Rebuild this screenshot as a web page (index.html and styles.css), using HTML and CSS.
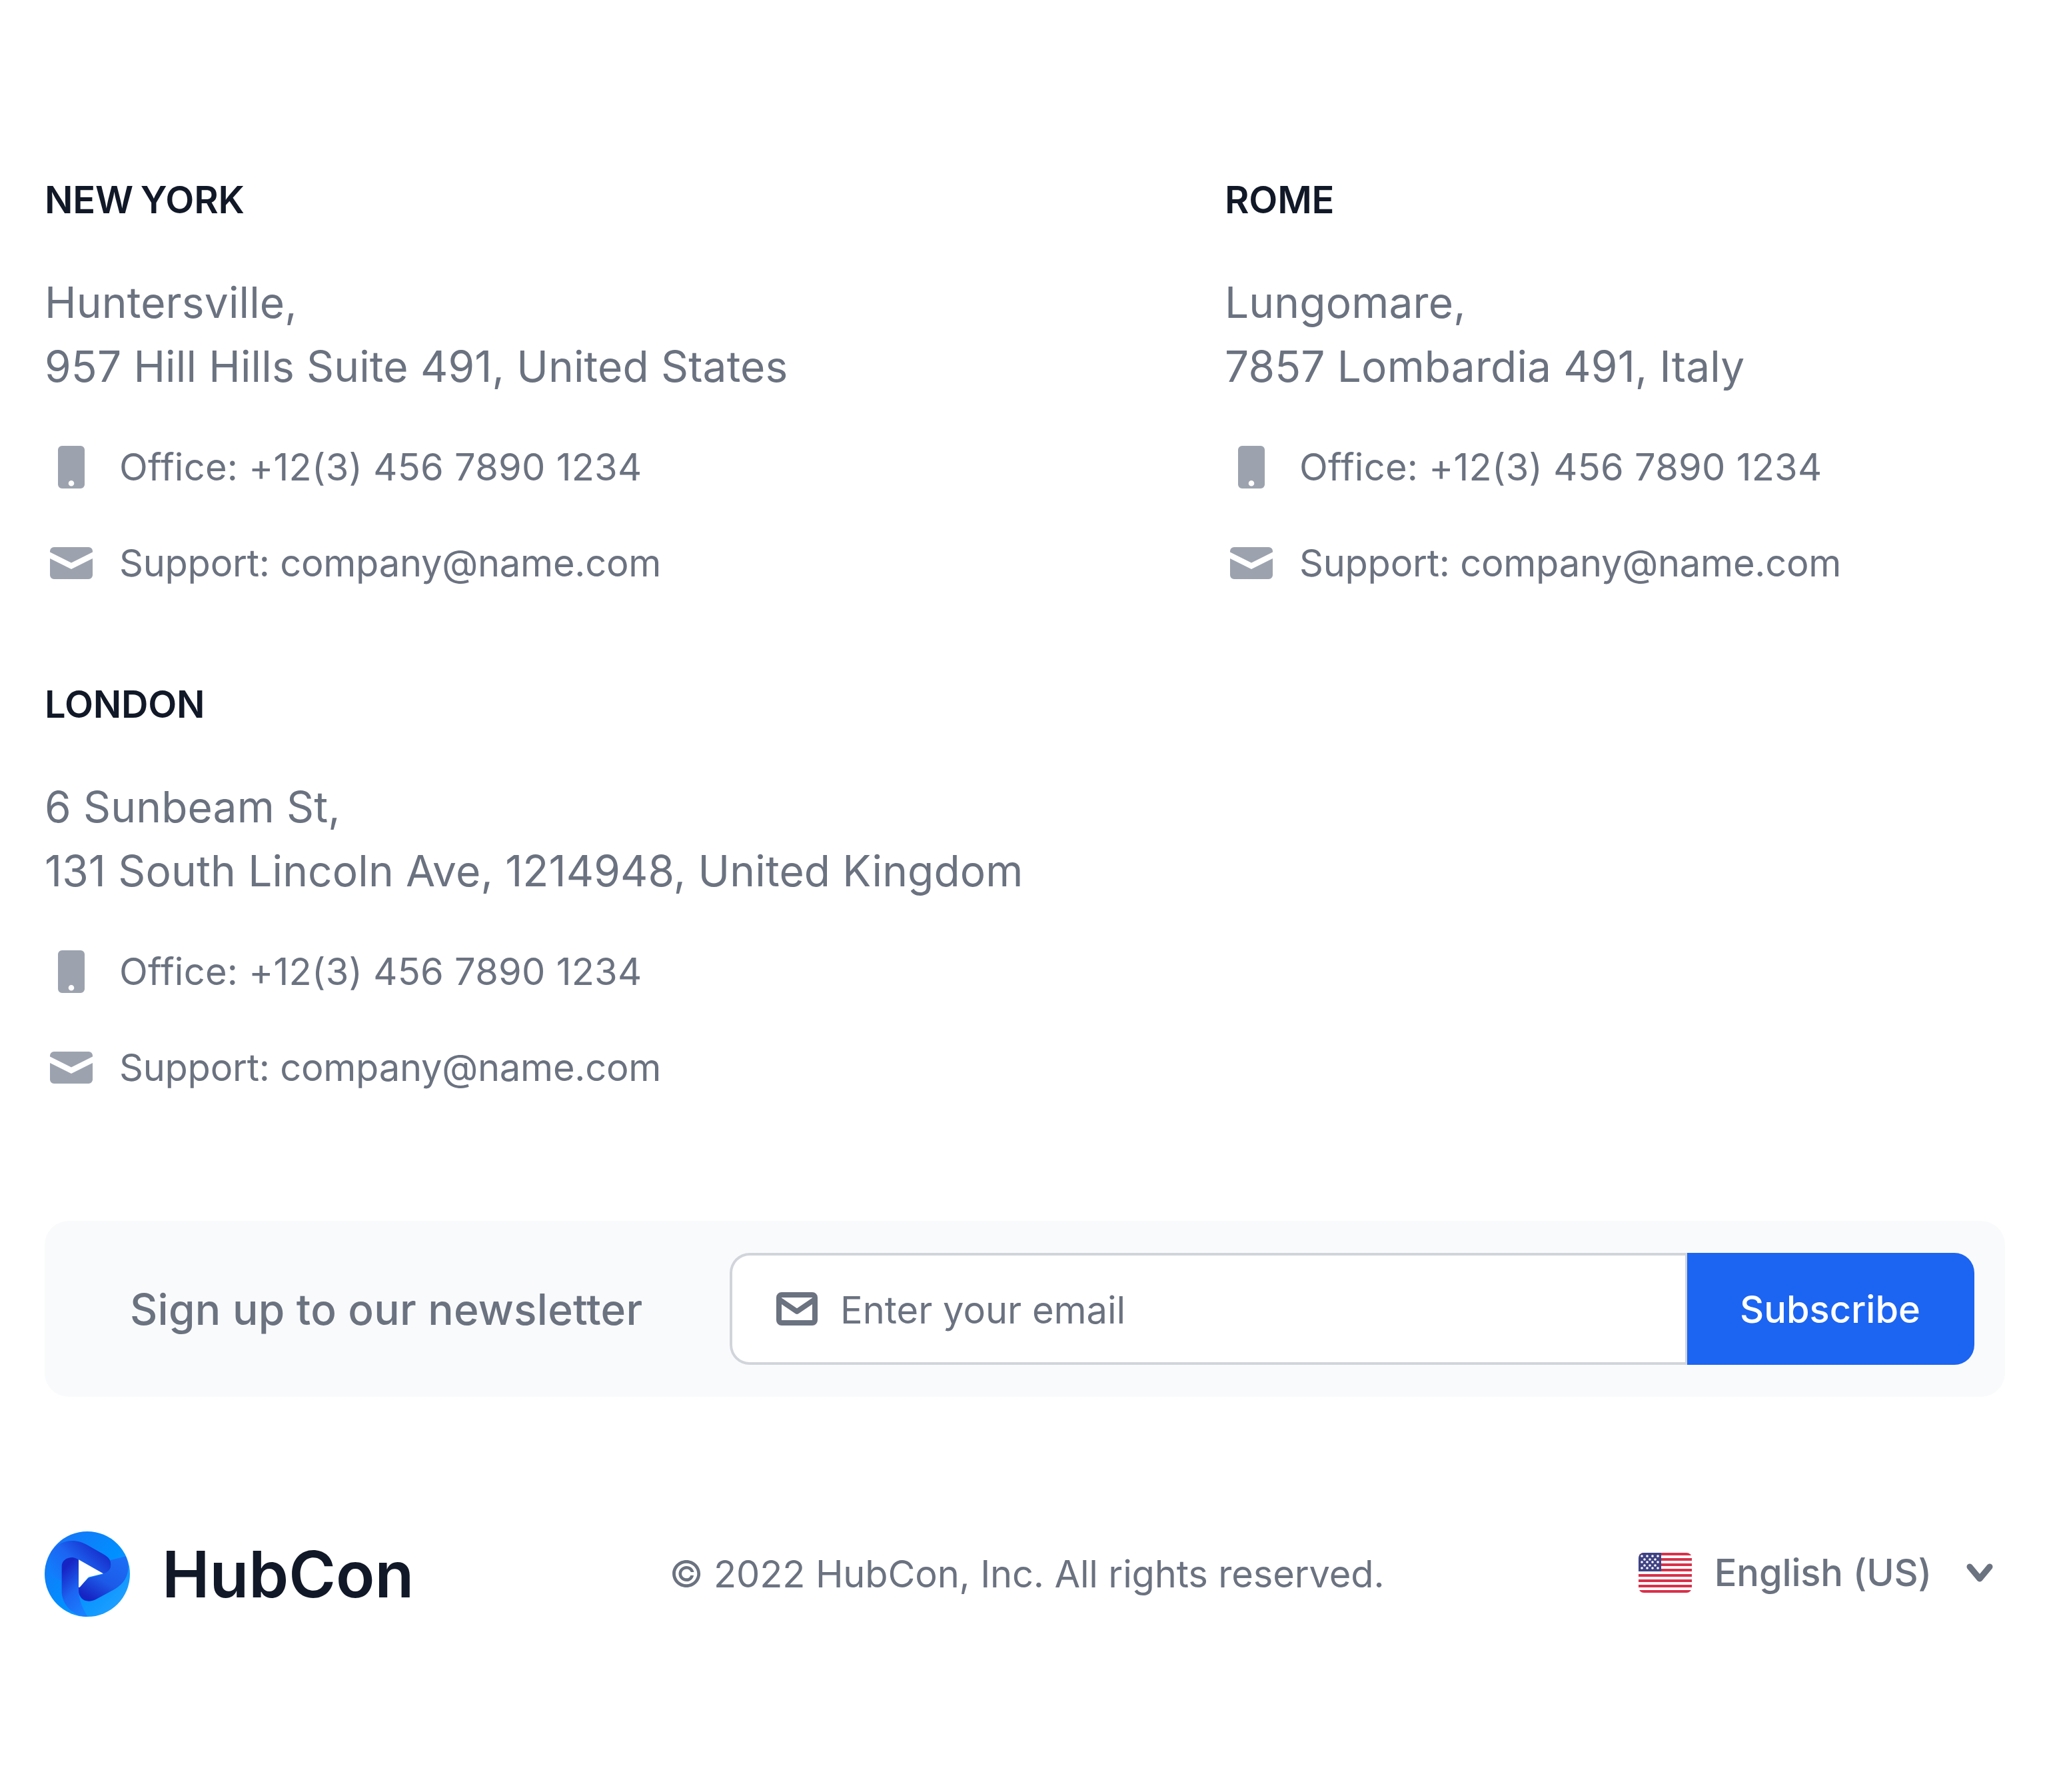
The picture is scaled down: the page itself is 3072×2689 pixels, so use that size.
FILE: index.html
```html
<!DOCTYPE html>
<html lang="en">

<head>
    <meta charset="UTF-8">
    <title>HubCon footer</title>
    <link rel="stylesheet" href="styles.css">
</head>

<body>
    <footer class="footer">
        <!-- Offices -->
        <div class="offices">
            <div class="office">
                <h2>NEW YORK</h2>
                <p class="address">Huntersville,<br>957 Hill Hills Suite 491, United States</p>
                <div class="contact phone">
                    <svg class="contact-icon" viewBox="0 0 80 80"><path fill-rule="evenodd" d="M26 8h28a6 6 0 0 1 6 6v52a6 6 0 0 1-6 6H26a6 6 0 0 1-6-6V14a6 6 0 0 1 6-6zm14 52a4.300 4.300 0 1 0 0 8.600 4.300 4.300 0 0 0 0-8.600z"/></svg>
                    <span>Office: +12(3) 456 7890 1234</span>
                </div>
                <div class="contact mail">
                    <svg class="contact-icon" viewBox="0 0 80 80"><path d="M8 23.500V22a6 6 0 0 1 6-6h52a6 6 0 0 1 6 6v1.500L40 39.500 8 23.500z"/><path d="M8 33v25a6 6 0 0 0 6 6h52a6 6 0 0 0 6-6V33L40 49 8 33z"/></svg>
                    <span>Support: company@name.com</span>
                </div>
            </div>
            <div class="office">
                <h2>ROME</h2>
                <p class="address">Lungomare,<br>7857 Lombardia 491, Italy</p>
                <div class="contact phone">
                    <svg class="contact-icon" viewBox="0 0 80 80"><path fill-rule="evenodd" d="M26 8h28a6 6 0 0 1 6 6v52a6 6 0 0 1-6 6H26a6 6 0 0 1-6-6V14a6 6 0 0 1 6-6zm14 52a4.300 4.300 0 1 0 0 8.600 4.300 4.300 0 0 0 0-8.600z"/></svg>
                    <span>Office: +12(3) 456 7890 1234</span>
                </div>
                <div class="contact mail">
                    <svg class="contact-icon" viewBox="0 0 80 80"><path d="M8 23.500V22a6 6 0 0 1 6-6h52a6 6 0 0 1 6 6v1.500L40 39.500 8 23.500z"/><path d="M8 33v25a6 6 0 0 0 6 6h52a6 6 0 0 0 6-6V33L40 49 8 33z"/></svg>
                    <span>Support: company@name.com</span>
                </div>
            </div>
            <div class="office">
                <h2>LONDON</h2>
                <p class="address">6 Sunbeam St,<br>131 South Lincoln Ave, 1214948, United Kingdom</p>
                <div class="contact phone">
                    <svg class="contact-icon" viewBox="0 0 80 80"><path fill-rule="evenodd" d="M26 8h28a6 6 0 0 1 6 6v52a6 6 0 0 1-6 6H26a6 6 0 0 1-6-6V14a6 6 0 0 1 6-6zm14 52a4.300 4.300 0 1 0 0 8.600 4.300 4.300 0 0 0 0-8.600z"/></svg>
                    <span>Office: +12(3) 456 7890 1234</span>
                </div>
                <div class="contact mail">
                    <svg class="contact-icon" viewBox="0 0 80 80"><path d="M8 23.500V22a6 6 0 0 1 6-6h52a6 6 0 0 1 6 6v1.500L40 39.500 8 23.500z"/><path d="M8 33v25a6 6 0 0 0 6 6h52a6 6 0 0 0 6-6V33L40 49 8 33z"/></svg>
                    <span>Support: company@name.com</span>
                </div>
            </div>
        </div>

        <!-- Newsletter -->
        <div class="newsletter">
            <div class="newsletter-title">Sign up to our newsletter</div>
            <div class="email-field">
                <svg class="email-icon" viewBox="0 0 62 50" fill="none" stroke="#6b7280" stroke-width="8" stroke-linejoin="round">
                    <rect x="4" y="4" width="54" height="42" rx="4"/>
                    <path d="M6 12l25 17 25-17"/>
                </svg>
                <input type="email" placeholder="Enter your email">
            </div>
            <button class="subscribe">Subscribe</button>
        </div>

        <!-- Bottom row -->
        <div class="bottom">
            <div class="brand">
                <svg class="logo" viewBox="81 78 384 384">
                    <defs>
                        <linearGradient id="logoBase" x1="0" y1="0" x2="1" y2="1">
                            <stop offset="0" stop-color="#1c6ef5"/>
                            <stop offset="0.55" stop-color="#0090ff"/>
                            <stop offset="1" stop-color="#2aa5ff"/>
                        </linearGradient>
                        <linearGradient id="logoTop" x1="0" y1="1" x2="1" y2="0.300">
                            <stop offset="0" stop-color="#0f84ff"/>
                            <stop offset="0.500" stop-color="#1c64f2"/>
                            <stop offset="1" stop-color="#1624c4"/>
                        </linearGradient>
                        <linearGradient id="logoBottom" x1="0.900" y1="0.100" x2="0.300" y2="1">
                            <stop offset="0" stop-color="#1c6cf5"/>
                            <stop offset="0.550" stop-color="#1c5ae8"/>
                            <stop offset="1" stop-color="#1624c4"/>
                        </linearGradient>
                        <linearGradient id="logoLeft" x1="0.300" y1="0.100" x2="0.700" y2="1">
                            <stop offset="0" stop-color="#1624c4"/>
                            <stop offset="0.500" stop-color="#1c64f2"/>
                            <stop offset="1" stop-color="#1a80ff"/>
                        </linearGradient>
                    </defs>
                    <circle cx="273" cy="270" r="192" fill="url(#logoBase)"/>
                    <path d="M108 172C135 135 170 120 205 120c25 0 48 8 70 20l75 43c18 11 30 25 30 45 0 22-15 36-35 42L234 205c-10-6-20-10-29-10-27 0-47 20-47 45v60l-50-20z" fill="url(#logoTop)"/>
                    <path d="M158 235c0-24 20-40 47-40 10 0 19 4 29 10v130c0 40 10 75 40 127-70-2-116-60-116-112z" fill="url(#logoLeft)"/>
                    <path d="M446 190c24 55 10 115-50 148l-86 47c-10 5-20 7-30 7-28 0-46-22-46-47v-15l40-38c5-5 14-7 22-9l49-13c20-6 35-20 35-42 0-8-2-14-5-20z" fill="url(#logoBottom)"/>
                    <path d="M234 205l111 63-58 14c-6 1-10 3-14 8l-32 37c-3 4-7 4-7-1z" fill="#fff"/>
                </svg>
                <span class="brand-name">HubCon</span>
            </div>
            <div class="copyright">© 2022 HubCon, Inc. All rights reserved.</div>
            <div class="language">
                <svg class="flag" viewBox="0 0 80 60">
                    <defs>
                        <clipPath id="flagClip"><rect y="0" width="80" height="60" rx="8"/></clipPath>
                    </defs>
                    <g clip-path="url(#flagClip)">
                        <rect width="80" height="60" fill="#fff"/>
                        <rect y="0" width="80" height="4" fill="#d9304a"/>
                        <rect y="8" width="80" height="4" fill="#d9304a"/>
                        <rect y="16" width="80" height="4" fill="#d9304a"/>
                        <rect y="24" width="80" height="4" fill="#d9304a"/>
                        <rect y="32" width="80" height="4" fill="#d9304a"/>
                        <rect y="40" width="80" height="4" fill="#d9304a"/>
                        <rect y="48" width="80" height="4" fill="#d9304a"/>
                        <rect y="56" width="80" height="4" fill="#d9304a"/>
                        <rect width="34" height="28" fill="#3f4384"/>
                        <g fill="#fff">
                            <circle cx="5" cy="5" r="1.800"/><circle cx="13" cy="5" r="1.800"/><circle cx="21" cy="5" r="1.800"/><circle cx="29" cy="5" r="1.800"/>
                            <circle cx="9" cy="10" r="1.800"/><circle cx="17" cy="10" r="1.800"/><circle cx="25" cy="10" r="1.800"/>
                            <circle cx="5" cy="14" r="1.800"/><circle cx="13" cy="14" r="1.800"/><circle cx="21" cy="14" r="1.800"/><circle cx="29" cy="14" r="1.800"/>
                            <circle cx="9" cy="19" r="1.800"/><circle cx="17" cy="19" r="1.800"/><circle cx="25" cy="19" r="1.800"/>
                            <circle cx="5" cy="23" r="1.800"/><circle cx="13" cy="23" r="1.800"/><circle cx="21" cy="23" r="1.800"/><circle cx="29" cy="23" r="1.800"/>
                        </g>
                    </g>
                </svg>
                <span class="language-name">English (US)</span>
                <svg class="chevron" viewBox="0 0 40 28" fill="none" stroke="#6b7280" stroke-width="9" stroke-linecap="round" stroke-linejoin="round"><path d="M5 5l15 18L35 5"/></svg>
            </div>
        </div>
    </footer>
</body>

</html>
```

FILE: styles.css
```css
body {
    margin: 0;
    background-color: #fff;
    font-family: Inter, "Noto Sans", sans-serif;
    color: #6b7280;
}

.footer {
    padding: 264px 63px 0 67px;
}

.offices {
    display: grid;
    grid-template-columns: 1771px 1fr;
    row-gap: 128px;
}

.office h2 {
    margin: 0;
    font-size: 56px;
    line-height: 72px;
    font-weight: 600;
    letter-spacing: -0.2px;
    word-spacing: -3px;
    color: #111827;
}

.address {
    margin: 70px 0 0;
    font-size: 64px;
    line-height: 96px;
    letter-spacing: 0.15px;
}

.contact {
    display: flex;
    align-items: center;
    gap: 32px;
    margin-top: 55px;
    height: 96px;
    font-size: 56px;
}

.contact.phone {
    letter-spacing: 0.26px;
}

.contact.mail {
    margin-top: 48px;
    letter-spacing: -0.24px;
}

.contact-icon {
    width: 80px;
    height: 80px;
    fill: #9ca3af;
}

.newsletter {
    display: flex;
    align-items: center;
    margin-top: 182px;
    padding: 48px 46px 48px 48px;
    background-color: #f9fafb;
    border-radius: 36px;
}

.newsletter-title {
    width: 980px;
    padding-left: 80px;
    box-sizing: border-box;
    font-size: 64px;
    font-weight: 500;
    letter-spacing: 0.24px;
}

.email-field {
    display: flex;
    align-items: center;
    flex: 1;
    height: 168px;
    padding-left: 66px;
    box-sizing: border-box;
    background-color: #fff;
    border: 4px solid #d1d5db;
    border-right-width: 3px;
    border-radius: 30px 0 0 30px;
}

.email-icon {
    width: 62px;
    height: 50px;
    margin-right: 34px;
}

.email-field input {
    flex: 1;
    padding: 3px 0 0;
    border: none;
    outline: none;
    background: none;
    font-family: inherit;
    font-size: 56px;
    color: #6b7280;
}

.email-field input::placeholder {
    color: #6b7280;
    opacity: 1;
}

.subscribe {
    width: 431px;
    height: 168px;
    padding: 2px 2px 0 0;
    border: none;
    border-radius: 0 30px 30px 0;
    background-color: #1c64f2;
    color: #fff;
    font-family: inherit;
    font-size: 56px;
    font-weight: 500;
}

.bottom {
    display: flex;
    align-items: center;
    justify-content: space-between;
    margin-top: 202px;
}

.brand {
    display: flex;
    align-items: center;
    gap: 48px;
}

.logo {
    width: 128px;
    height: 128px;
}

.brand-name {
    font-size: 96px;
    font-weight: 600;
    color: #111827;
}

.copyright {
    margin-left: 2px;
    font-size: 56px;
    letter-spacing: -0.15px;
}

.language {
    display: flex;
    align-items: center;
    padding-bottom: 4px;
}

.flag {
    width: 80px;
    height: 60px;
    margin-right: 34px;
}

.language-name {
    font-size: 56px;
    font-weight: 500;
    letter-spacing: -0.15px;
    margin-right: 52px;
}

.chevron {
    width: 40px;
    height: 28px;
    margin-right: 18px;
}
```
